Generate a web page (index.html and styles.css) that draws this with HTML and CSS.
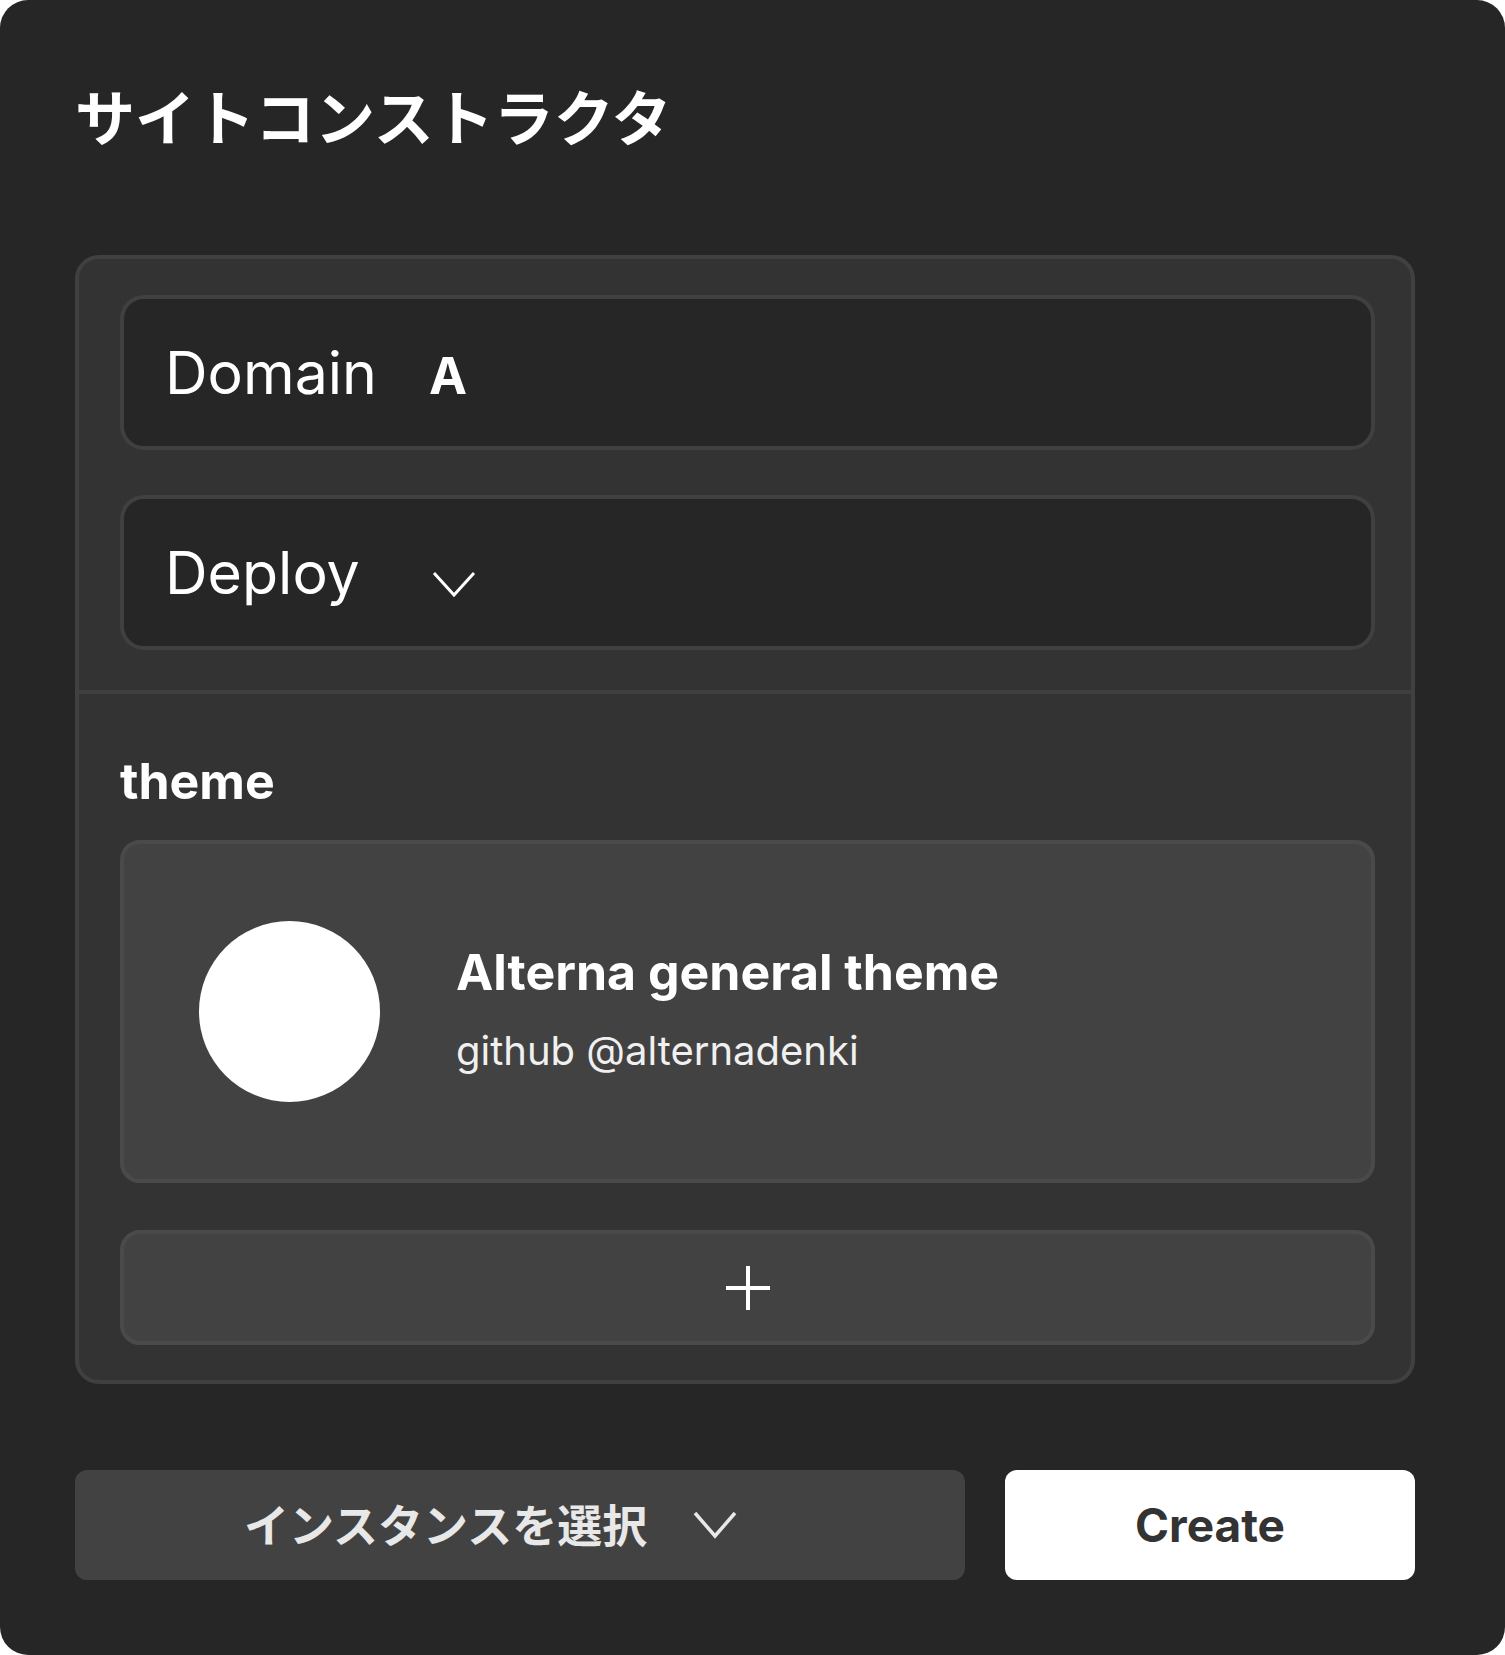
FILE: index.html
```html
<!DOCTYPE html>
<html lang="ja">
<head>
<meta charset="utf-8">
<title>サイトコンストラクタ</title>
<link rel="stylesheet" href="styles.css">
</head>
<body>
<div class="app">
  <h1 class="title">サイトコンストラクタ</h1>
  <section class="panel">
    <div class="fields">
      <div class="field">
        <div class="field-row">
          <span class="field-label">Domain</span>
          <span class="field-value">A</span>
        </div>
      </div>
      <div class="field">
        <span class="field-label">Deploy</span>
        <svg class="deploy-chev" width="44" height="27" viewBox="0 0 44 27"><polyline points="2,2 22,24 42,2" fill="none" stroke="#ffffff" stroke-width="3"/></svg>
      </div>
    </div>
    <div class="theme">
      <h2 class="theme-heading">theme</h2>
      <div class="theme-card">
        <div class="avatar"></div>
        <div class="theme-info">
          <div class="theme-name">Alterna general theme</div>
          <div class="theme-author">github @alternadenki</div>
        </div>
      </div>
      <button class="add-btn" type="button">
        <svg width="44" height="44" viewBox="0 0 44 44"><line x1="22" y1="0" x2="22" y2="44" stroke="#ffffff" stroke-width="4"/><line x1="0" y1="22" x2="44" y2="22" stroke="#ffffff" stroke-width="4"/></svg>
      </button>
    </div>
  </section>
  <div class="actions">
    <button class="instance-btn" type="button">
      <span class="instance-label">インスタンスを選択</span>
      <svg class="instance-chev" width="44" height="28" viewBox="0 0 44 28"><polyline points="2,2 22,25 42,2" fill="none" stroke="#e8e8e8" stroke-width="3.5"/></svg>
    </button>
    <button class="create-btn" type="button">Create</button>
  </div>
</div>
</body>
</html>
```

FILE: styles.css
```css
html, body {
  margin: 0;
  padding: 0;
  background: #ffffff;
}

body {
  font-family: Inter, "Noto Sans CJK JP", sans-serif;
  color: #ffffff;
}

.app {
  box-sizing: border-box;
  width: 1505px;
  height: 1655px;
  background: #262626;
  border-radius: 28px;
  padding: 80px 90px 0 75px;
  display: flex;
  flex-direction: column;
}

.title {
  margin: 0;
  font-family: "Noto Sans CJK JP", sans-serif;
  font-weight: 700;
  font-size: 60px;
  line-height: 70px;
  color: #ffffff;
}

.panel {
  margin-top: 105px;
  background: #333333;
  border: 4px solid #404040;
  border-radius: 24px;
  display: flex;
  flex-direction: column;
}

.fields {
  display: flex;
  flex-direction: column;
  gap: 45px;
  padding: 36px 36px 40px 41px;
  border-bottom: 4px solid #404040;
}

.field {
  box-sizing: border-box;
  height: 155px;
  background: #262626;
  border: 4px solid #404040;
  border-radius: 24px;
  padding-left: 41px;
  display: flex;
  align-items: center;
}

.field-row {
  display: flex;
  align-items: baseline;
}

.field-label {
  font-family: Inter, sans-serif;
  font-weight: 400;
  font-size: 59px;
  line-height: 1;
  color: #ffffff;
}

.field-value {
  margin-left: 52px;
  font-family: Inter, sans-serif;
  font-weight: 700;
  font-size: 51px;
  line-height: 1;
  color: #ffffff;
}

.deploy-chev {
  margin-left: 72px;
  margin-top: 24px;
}

.theme {
  padding: 58px 36px 35px 41px;
  display: flex;
  flex-direction: column;
}

.theme-heading {
  margin: 0 0 30px 0;
  font-family: Inter, sans-serif;
  font-weight: 700;
  font-size: 50px;
  line-height: 58px;
  color: #ffffff;
}

.theme-card {
  box-sizing: border-box;
  height: 343px;
  background: #424242;
  border: 4px solid #4a4a4a;
  border-radius: 20px;
  padding-left: 75px;
  display: flex;
  align-items: center;
}

.avatar {
  width: 181px;
  height: 181px;
  border-radius: 50%;
  background: #ffffff;
  flex: none;
}

.theme-info {
  margin-left: 76px;
  margin-bottom: 6px;
  display: flex;
  flex-direction: column;
  gap: 25px;
}

.theme-name {
  font-family: Inter, sans-serif;
  font-weight: 700;
  font-size: 50px;
  line-height: 60px;
  color: #ffffff;
}

.theme-author {
  font-family: Inter, sans-serif;
  font-weight: 400;
  font-size: 40px;
  line-height: 48px;
  color: #f0f0f0;
}

.add-btn {
  margin-top: 47px;
  box-sizing: border-box;
  height: 115px;
  background: #424242;
  border: 4px solid #4a4a4a;
  border-radius: 20px;
  padding: 0;
  display: flex;
  align-items: center;
  justify-content: center;
  cursor: pointer;
}

.actions {
  margin-top: 86px;
  display: flex;
  gap: 40px;
}

.instance-btn {
  flex: 1;
  height: 110px;
  background: #424242;
  border: none;
  border-radius: 12px;
  padding: 0 0 0 169px;
  display: flex;
  align-items: center;
  cursor: pointer;
}

.instance-label {
  font-family: "Noto Sans CJK JP", sans-serif;
  font-weight: 700;
  font-size: 45px;
  line-height: 1;
  color: #e8e8e8;
  margin-bottom: 4px;
}

.instance-chev {
  margin-left: 46px;
}

.create-btn {
  width: 410px;
  flex: none;
  height: 110px;
  background: #ffffff;
  border: none;
  border-radius: 12px;
  padding: 0;
  font-family: Inter, sans-serif;
  font-weight: 700;
  font-size: 46px;
  color: #333333;
  cursor: pointer;
}
```
